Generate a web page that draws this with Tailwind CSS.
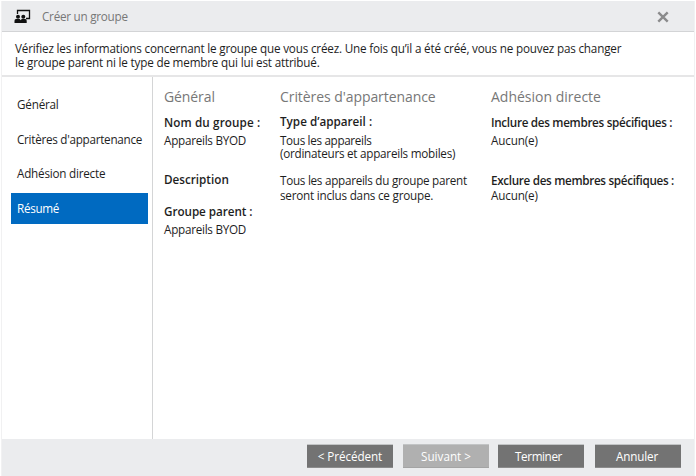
<!DOCTYPE html>
<html lang="fr">
<head>
<meta charset="utf-8">
<title>Créer un groupe</title>
<script src="https://cdn.jsdelivr.net/npm/@tailwindcss/browser@4"></script>
</head>
<body class="w-[696px] h-[476px] overflow-hidden bg-white font-['Open_Sans','Noto_Sans',sans-serif] text-[11.7px] leading-[14px] text-[#1e1e1e] whitespace-nowrap">
<div class="flex flex-col w-[694px] h-[475px] ml-px mt-px border-x border-[#f1f1f2]">
  <header class="flex items-center h-[31px] pl-[12px] pr-[25px] bg-[#ebecee] border-b border-[#d3d4d6] shrink-0">
    <svg class="w-[17px] h-[15px] mt-px" viewBox="0 0 17 15">
      <path d="M3.500 5V1.500h12v8H12" fill="none" stroke="#111" stroke-width="1.300"/>
      <g fill="#111"><circle cx="4" cy="7.800" r="2"/><circle cx="9.300" cy="7.800" r="2"/><path d="M.5 14v-2.300Q.5 10 2 10h3.700l1 1.200 1-1.200h3.500q1.500 0 1.500 1.700V14z"/></g>
    </svg>
    <h1 class="ml-[11px] text-[#777] tracking-[-0.25px]">Créer un groupe</h1>
    <svg class="ml-auto w-[12px] h-[12px] mt-px" viewBox="0 0 12 12"><path d="M1.300 1.300l9.400 9.400m0-9.400l-9.400 9.400" stroke="#8b8b8c" stroke-width="2.400"/></svg>
  </header>
  <section class="h-[45px] pt-[9px] pl-[13px] border-b-2 border-[#e6e6e7] shrink-0">
    <p class="tracking-[-0.187px]">Vérifiez les informations concernant le groupe que vous créez. Une fois qu’il a été créé, vous ne pouvez pas changer</p>
    <p class="tracking-[-0.18px]">le groupe parent ni le type de membre qui lui est attribué.</p>
  </section>
  <main class="flex flex-1 min-h-0">
    <nav class="w-[151px] pt-[12px] pl-[9px] border-r border-[#d4d5d6] leading-[31px]">
      <div class="h-[35px] pl-[6px] tracking-[-0.2px]">Général</div>
      <div class="h-[34px] pl-[6px] tracking-[-0.27px]">Critères d'appartenance</div>
      <div class="h-[35px] pl-[6px] tracking-[-0.22px]">Adhésion directe</div>
      <div class="h-[31px] w-[137px] pl-[6px] tracking-[-0.3px] bg-[#006ac1] text-white">Résumé</div>
    </nav>
    <section class="w-[116px] ml-[11px] pt-[10px]">
      <h2 class="text-[14px] leading-[20px] tracking-[-0.1px] text-[#777]">Général</h2>
      <h3 class="mt-[8px] font-semibold tracking-[0.12px]">Nom du groupe :</h3>
      <p class="mt-[4px] tracking-[-0.26px]">Appareils BYOD</p>
      <h3 class="mt-[25px] font-semibold">Description</h3>
      <h3 class="mt-[18px] font-semibold tracking-[-0.05px]">Groupe parent :</h3>
      <p class="mt-[4px] tracking-[-0.26px]">Appareils BYOD</p>
    </section>
    <section class="w-[211px] pt-[10px]">
      <h2 class="text-[14px] leading-[20px] tracking-[-0.07px] text-[#777]">Critères d'appartenance</h2>
      <h3 class="mt-[7px] font-semibold">Type d’appareil :</h3>
      <div class="mt-[6px] leading-[13px]">
        <p class="tracking-[-0.33px]">Tous les appareils</p>
        <p class="tracking-[-0.25px]">(ordinateurs et appareils mobiles)</p>
      </div>
      <div class="mt-[13px] leading-[15px]">
        <p class="tracking-[-0.27px]">Tous les appareils du groupe parent</p>
        <p class="tracking-[-0.22px]">seront inclus dans ce groupe.</p>
      </div>
    </section>
    <section class="pt-[10px]">
      <h2 class="text-[14px] leading-[20px] text-[#777]">Adhésion directe</h2>
      <h3 class="mt-[8px] font-semibold tracking-[-0.31px]">Inclure des membres spécifiques :</h3>
      <p class="mt-[4px] tracking-[-0.16px]">Aucun(e)</p>
      <h3 class="mt-[26px] font-semibold tracking-[-0.32px]">Exclure des membres spécifiques :</h3>
      <p class="mt-px tracking-[-0.16px]">Aucun(e)</p>
    </section>
  </main>
  <footer class="flex h-[37px] pt-[5px] pl-[305px] bg-[#ebecee] text-white shrink-0">
    <button class="w-[86px] h-[24px] bg-[#737373] border-y border-t-[#c2c4c5] border-b-[#8c8c8c] tracking-[-0.08px]">&lt; Précédent</button>
    <button class="w-[86px] h-[24px] ml-[10px] bg-[#b0b0b0] border-y border-t-[#c2c4c5] border-b-[#a4a4a4]">Suivant &gt;</button>
    <button class="w-[86px] h-[24px] ml-[9px] pr-[5px] bg-[#737373] border-y border-t-[#c2c4c5] border-b-[#8c8c8c] tracking-[-0.4px]">Terminer</button>
    <button class="w-[86px] h-[24px] ml-[11px] pr-[2px] bg-[#737373] border-y border-t-[#c2c4c5] border-b-[#8c8c8c] tracking-[-0.17px]">Annuler</button>
  </footer>
</div>
</body>
</html>
